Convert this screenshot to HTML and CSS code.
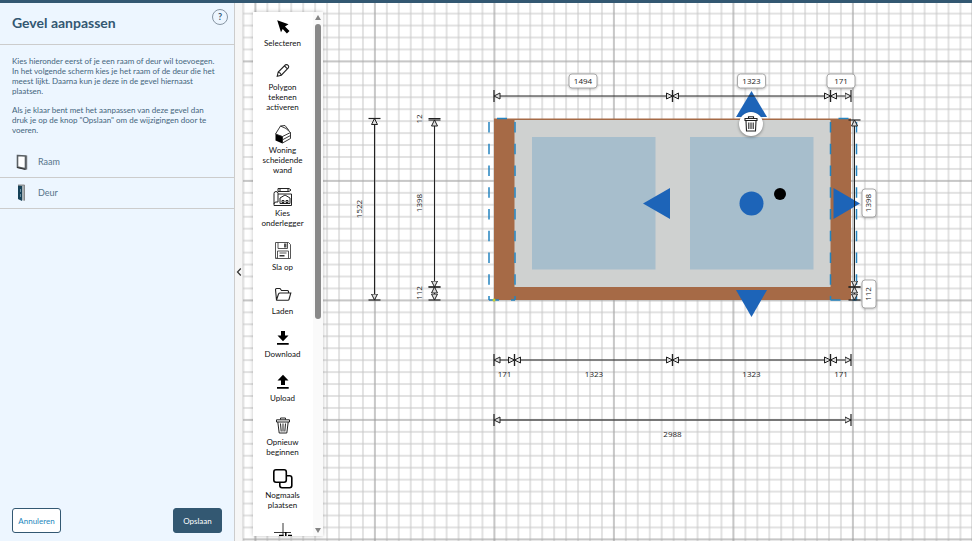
FILE: index.html
```html
<!DOCTYPE html>
<html lang="nl">
<head>
<meta charset="utf-8">
<title>Gevel aanpassen</title>
<link rel="stylesheet" href="styles.css">
</head>
<body>
<div class="app">
  <aside class="sidebar">
    <header class="sidebar__header">
      <h1 class="sidebar__title">Gevel aanpassen</h1>
      <button class="help" type="button" aria-label="Help">?</button>
    </header>
    <div class="intro">
      <p>Kies hieronder eerst of je een raam of deur wil toevoegen. In het volgende scherm kies je het raam of de deur die het meest lijkt. Daarna kun je deze in de gevel hiernaast plaatsen.</p>
      <p>Als je klaar bent met het aanpassen van deze gevel dan druk je op de knop "Opslaan" om de wijzigingen door te voeren.</p>
    </div>
    <nav class="elements">
      <button class="element" type="button">
        <svg class="element__icon" viewBox="0 0 12 18" aria-hidden="true">
          <path d="M1.500 2.500L9.500 3V15.800L1.500 14Z" fill="#fff" stroke="#5a6064" stroke-width="1.600"/>
          <path d="M10.700 2.500V16.500" stroke="#333" stroke-width=".7"/>
          <path d="M1 14.500L9.500 16.500" stroke="#333" stroke-width="1.200"/>
        </svg>
        Raam
      </button>
      <button class="element" type="button">
        <svg class="element__icon" viewBox="0 0 12 18" aria-hidden="true">
          <path d="M2 1H8.500V17L2 15Z" fill="#a8b0b4"/>
          <path d="M2 1.500L6 2V17L2 15Z" fill="#154158"/>
          <path d="M4.500 5V8M4.500 10V13" stroke="#7fa2b4" stroke-width=".8"/>
          <path d="M2 1H8.500V16.500" fill="none" stroke="#777" stroke-width=".8"/>
        </svg>
        Deur
      </button>
    </nav>
    <footer class="actions">
      <button class="button" type="button">Annuleren</button>
      <button class="button button--primary" type="button">Opslaan</button>
    </footer>
  </aside>

  <button class="collapse" type="button" aria-label="Paneel inklappen">
    <svg width="6" height="10" viewBox="0 0 6 10" aria-hidden="true"><path d="M4.800 1.500L1.500 5L4.800 8.500" fill="none" stroke="#333" stroke-width="1.200"/></svg>
  </button>

  <main class="stage">
    <svg class="drawing" role="img" aria-label="Geveltekening">
      <defs>
        <pattern id="minor" width="11.950" height="11.950" patternUnits="userSpaceOnUse" x="245.425" y="291.425">
          <path d="M5.975 0V11.950M0 5.975H11.950" stroke="#c6c6c6" stroke-width="1"/>
        </pattern>
        <pattern id="major" width="119.500" height="119.500" patternUnits="userSpaceOnUse" x="191.650" y="237.650">
          <path d="M59.750 0V119.500M0 59.750H119.500" stroke="#888" stroke-width=".6"/>
        </pattern>
        <marker id="arrow" viewBox="0 0 8 14" markerWidth="8" markerHeight="14" refX="6.500" refY="7" orient="auto-start-reverse" markerUnits="userSpaceOnUse">
          <path d="M.5 4L6.500 7L.5 10Z" fill="#ddd" stroke="#222" stroke-width="1"/>
          <path d="M6.500 1V13" stroke="#222" stroke-width="1.200"/>
        </marker>
        <g id="wall-outline" class="outline">
          <path d="M0-178V0M26-178V0" stroke-dasharray="10.500 11.250"/>
          <path d="M8-181.500H18M0 0H10M22 0H26"/>
        </g>
      </defs>
      <rect width="100%" height="100%" fill="url(#minor)"/>
      <rect width="100%" height="100%" fill="url(#major)"/>
      <g transform="translate(251 297)">
        <rect x="0" y="-181.500" width="357" height="181.500" fill="#a66a46"/>
        <rect x="20.500" y="-180" width="316" height="167" fill="#cfd1d0"/>
        <rect x="38" y="-163" width="123.500" height="132.500" fill="#a7becc"/>
        <rect x="196" y="-163" width="123.500" height="132.500" fill="#a7becc"/>
        <use href="#wall-outline" x="-5"/>
        <use href="#wall-outline" x="336.500"/>
        <circle cx="0" cy="0" r="1.500" fill="#c2cf2c"/>

        <g class="handles">
          <path d="M257.500-209L273-183H242Z"/>
          <path d="M257.500 17L273-10H242Z"/>
          <path d="M149-96.500L176-112V-81Z"/>
          <path d="M366-96.500L339.500-112V-81Z"/>
          <circle cx="257.500" cy="-96.500" r="12"/>
        </g>
        <circle cx="286" cy="-106" r="6"/>

        <g class="dimensions">
          <path d="M0-204H178.500"/><path d="M178.500-204H336.500"/><path d="M336.500-204H357"/>
          <path d="M0 60H20.500"/><path d="M20.500 60H178.500"/><path d="M178.500 60H336.500"/><path d="M336.500 60H357"/>
          <path d="M0 120H357"/>
          <path d="M-119.500-181.500V0"/>
          <path d="M-59.500-180V-13"/><path d="M-59.500-13V0"/>
          <path class="plain" d="M-65.500-181.500H-53.500"/>
          <path d="M360.500-180V-13"/><path d="M360.500-13V0"/>
        </g>

        <g class="pills">
          <rect x="75" y="-226" width="28" height="14" rx="3"/>
          <rect x="243.500" y="-226" width="28" height="14" rx="3"/>
          <rect x="333" y="-226" width="28" height="14" rx="3"/>
          <rect x="368" y="-111" width="14" height="28" rx="3"/>
          <rect x="368" y="-20" width="14" height="28" rx="3"/>
        </g>

        <g class="measures">
          <text x="89" y="-216">1494</text>
          <text x="257.500" y="-216">1323</text>
          <text x="347" y="-216">171</text>
          <text x="10.500" y="77">171</text>
          <text x="100" y="77">1323</text>
          <text x="257.500" y="77">1323</text>
          <text x="347" y="77">171</text>
          <text x="178.500" y="137">2988</text>
          <text transform="translate(-132 -91) rotate(-90)">1522</text>
          <text transform="translate(-72 -97) rotate(-90)">1398</text>
          <text transform="translate(-72 -181) rotate(-90)">12</text>
          <text transform="translate(-72 -7) rotate(-90)">112</text>
          <text transform="translate(377 -97) rotate(-90)">1398</text>
          <text transform="translate(377 -6) rotate(-90)">112</text>
        </g>
      </g>
    </svg>

    <button class="delete" type="button" aria-label="Verwijderen">
      <svg width="16" height="18" viewBox="0 0 16 18" aria-hidden="true">
        <g fill="none" stroke="#222" stroke-width="1.100">
          <path d="M5.500 3.500V1.800H10.500V3.500M2 5.500V3.500H14V5.500ZM3 6L3.500 16H12.500L13 6"/>
          <path d="M5.800 7.500V14M8 7.500V14M10.200 7.500V14"/>
        </g>
      </svg>
    </button>

    <div class="toolbar">
      <div class="toolbar__list">
        <button class="tool" type="button">
          <svg class="tool__icon" viewBox="0 0 20 20"><path d="M4.200 3.200L15.500 7.300L12 9.600L16.500 14L13.900 16.500L9.700 12L8 15.300Z" fill="#000"/></svg>
          Selecteren
        </button>
        <button class="tool" type="button">
          <svg class="tool__icon tool__icon--tall" viewBox="0 0 20 20"><path d="M4.200 15.800L5.200 11.500L12.500 4.300Q14 3.600 15.300 5Q16.200 6.300 15.300 7.500L8.300 14.700ZM5.200 11.500Q7.600 12 8.300 14.700M11.500 5.300L14.400 8.400" fill="none" stroke="#222" stroke-width="1.100"/></svg>
          Polygon tekenen activeren
        </button>
        <button class="tool" type="button">
          <svg class="tool__icon" viewBox="0 0 20 20">
            <path d="M2.500 10L9.500 12.500V19.500L2.500 16.500Z" fill="#000"/>
            <path d="M2.500 10L7.500 2L13 4.500L17.500 8.500V14.500L9.500 19V12.500M2.500 10L9.500 12.500L17.500 8.500M9.500 15.800L17.500 11.500M7.500 2L12 1.500L16 6.500" fill="none" stroke="#222" stroke-width=".9"/>
          </svg>
          Woning scheidende wand
        </button>
        <button class="tool" type="button">
          <svg class="tool__icon" viewBox="0 0 20 20"><g fill="none" stroke="#222" stroke-width="1">
            <path d="M5 1.500H16L18 3L16 4.500H5ZM7 1.500V4.500M15 1.500V4.500"/>
            <path d="M1 18.500V6.500Q1 4.500 3 4.500T5 6.500V15M1 17Q1 15 3 15H5M1 18.500H18.500V7H5"/>
            <path d="M7 16.500V11L12 8L17 11V16.500ZM9 15.500V13.500H11V15.500ZM13 13.500H15V15.500H13Z"/>
          </g></svg>
          Kies onderlegger
        </button>
        <button class="tool" type="button">
          <svg class="tool__icon tool__icon--tall" viewBox="0 0 20 20">
            <g fill="none" stroke="#444" stroke-width=".9"><path d="M2.500 2H15.500L17.500 4V18H2.500ZM5 2V8H14.500V2M4.500 18V10.500H15.500V18M6.500 12.500H13.500M3.800 16.500V17"/></g>
            <path d="M11 3H13.500V7H11Z" fill="#555"/><path d="M6.500 14.500H11.500V16H6.500Z" fill="#333"/>
          </svg>
          Sla op
        </button>
        <button class="tool" type="button">
          <svg class="tool__icon tool__icon--tall" viewBox="0 0 20 20"><path d="M3.500 15.500L2.500 5Q2.500 4 3.500 4H7L8.500 6H14.500Q15.500 6 15.500 7V8.500M3.500 15.500L5.500 9.500Q6 8.500 7 8.500H17.800L16 15Q15.800 15.700 15 15.700H3.800Z" fill="none" stroke="#222" stroke-width="1.100"/></svg>
          Laden
        </button>
        <button class="tool" type="button">
          <svg class="tool__icon" viewBox="0 0 20 20"><path d="M8 3H12V7.500H15.500L10 13.200L4.500 7.500H8ZM4 15H15.700V16.700H4Z" fill="#000"/></svg>
          Download
        </button>
        <button class="tool" type="button">
          <svg class="tool__icon tool__icon--tall" viewBox="0 0 20 20"><path d="M8 13.500H12V9H15.500L10 3.200L4.500 9H8ZM4 15.500H15.700V17.200H4Z" fill="#000"/></svg>
          Upload
        </button>
        <button class="tool" type="button">
          <svg class="tool__icon tool__icon--tall" viewBox="0 0 20 20"><path d="M7.500 4V2.500H12.500V4M3.500 6.500V4.300H16.500V6.500ZM4.800 6.500L6.200 17.500H13.800L15.200 6.500M7.500 8L8.200 16M10 8V16M12.500 8L11.800 16" fill="none" stroke="#222" stroke-width="1"/></svg>
          Opnieuw beginnen
        </button>
        <button class="tool" type="button">
          <svg class="tool__icon" viewBox="0 0 20 20"><g fill="#fff" stroke="#000" stroke-width="1.600"><rect x="6.800" y="6.800" width="12" height="12" rx="2.200"/><rect x=".8" y=".8" width="12.500" height="12.500" rx="2.200"/></g></svg>
          Nogmaals plaatsen
        </button>
        <button class="tool" type="button" aria-label="Uitlijnen">
          <svg class="tool__icon" viewBox="0 0 20 20"><path d="M10 1V20M1 10.500H18" stroke="#222" stroke-width=".9"/><path d="M12.800 10V14M6 13.500H10.500M15 13.500H19" stroke="#000" stroke-width="1.500"/></svg>
        </button>
      </div>
      <div class="scrollbar" aria-hidden="true">
        <svg class="scrollbar__arrow" viewBox="0 0 6 5"><path d="M3 0L6 5H0Z" fill="#858585"/></svg>
        <span class="scrollbar__track"><span class="scrollbar__thumb"></span></span>
        <svg class="scrollbar__arrow" viewBox="0 0 6 5"><path d="M0 0H6L3 5Z" fill="#858585"/></svg>
      </div>
    </div>
  </main>
</div>
</body>
</html>
```
FILE: styles.css
```css
* {
  box-sizing: border-box;
}

body {
  margin: 0;
  color: #335872;
  font: 8px/10px Lato, "Open Sans", sans-serif;
}

button {
  margin: 0;
  padding: 0;
  border: 0;
  background: none;
  color: inherit;
  font: inherit;
  cursor: pointer;
}

.app {
  display: flex;
  height: 100vh;
  border-top: 3px solid #335872;
}

/* Sidebar */

.sidebar {
  display: flex;
  flex: none;
  flex-direction: column;
  width: 235px;
  border-right: 1px solid #ccc;
  background: #edf6ff;
}

.sidebar__header {
  display: flex;
  justify-content: space-between;
  align-items: flex-start;
  height: 42px;
  padding: 6px 6px 0 12px;
  border-bottom: 1px solid #ccc;
}

.sidebar__title {
  margin: 5px 0 0;
  font-size: 14px;
  line-height: 18px;
}

.help {
  width: 16px;
  height: 16px;
  border: 1px solid #8795a3;
  border-radius: 50%;
  font-size: 9px;
  font-weight: bold;
  line-height: 14px;
}

.intro {
  padding: 11px 16px 3px 12px;
  color: #44657c;
}

.intro p {
  margin: 0 0 9px;
}

.element {
  display: flex;
  align-items: center;
  gap: 10px;
  width: 100%;
  height: 31px;
  padding: 0 16px;
  border-bottom: 1px solid #ccc;
  color: #56748a;
  font-size: 9px;
}

.element__icon {
  width: 12px;
  height: 18px;
}

.actions {
  display: flex;
  justify-content: space-between;
  margin-top: auto;
  padding: 0 12px 8px;
}

.button {
  width: 49px;
  height: 25px;
  border: 1px solid #335872;
  border-radius: 3px;
  background: #fff;
  color: #2487bd;
}

.button--primary {
  background: #335872;
  color: #fff;
}

.collapse {
  display: flex;
  flex: none;
  align-items: center;
  justify-content: center;
  width: 8px;
  border-right: 1px solid #e2e2e2;
  background: #f6f6f6;
}

/* Canvas */

.stage {
  position: relative;
  flex: 1;
  padding: 9px 10px 5px;
  overflow: hidden;
  background: #fff;
}

.drawing {
  position: absolute;
  inset: 0;
  width: 100%;
  height: 100%;
}

.outline {
  fill: none;
  stroke: #2484c0;
  stroke-width: 1.5;
}

.handles {
  fill: #1d64b8;
}

.dimensions path {
  fill: none;
  stroke: #222;
  marker-start: url(#arrow);
  marker-end: url(#arrow);
}

.dimensions .plain {
  marker: none;
}

.pills rect {
  fill: #fff;
  stroke: #aaa;
  filter: drop-shadow(0 1px 1px rgb(0 0 0 / 25%));
}

.measures {
  fill: #222;
  font: 8px "Open Sans", sans-serif;
  text-anchor: middle;
}

.delete {
  position: absolute;
  top: 109px;
  left: 496px;
  display: grid;
  place-items: center;
  width: 24px;
  height: 24px;
  border-radius: 50%;
  background: #fff;
  box-shadow: 0 1px 3px rgb(0 0 0 / 40%);
}

/* Toolbar */

.toolbar {
  position: relative;
  display: flex;
  width: 70px;
  height: 100%;
  background: #fff;
  box-shadow: 0 0 4px rgb(0 0 0 / 25%);
}

.toolbar__list {
  display: flex;
  flex: 1;
  flex-direction: column;
  gap: 12px;
  padding: 5px 1px 0 0;
  overflow: hidden;
}

.tool {
  display: flex;
  flex: none;
  flex-direction: column;
  align-items: center;
  gap: 1px;
  width: 100%;
  padding: 0 6px;
  color: #111;
}

.tool__icon {
  flex: none;
  width: 20px;
  height: 20px;
}

.tool__icon--tall {
  height: 21px;
}

.scrollbar {
  display: flex;
  flex: none;
  flex-direction: column;
  align-items: center;
  gap: 4px;
  width: 10px;
  padding: 3px 0;
  background: #fafafa;
}

.scrollbar__arrow {
  width: 6px;
  height: 5px;
}

.scrollbar__track {
  flex: 1;
  width: 6px;
}

.scrollbar__thumb {
  display: block;
  height: 59%;
  border-radius: 3px;
  background: #898989;
}
```
